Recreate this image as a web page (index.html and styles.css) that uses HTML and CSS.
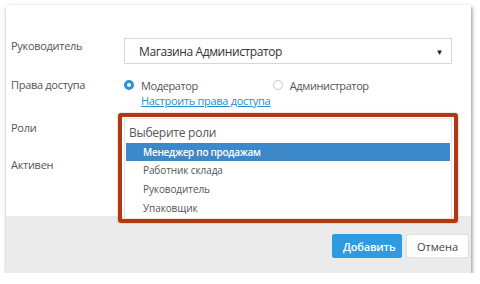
FILE: index.html
```html
<!DOCTYPE html>
<html lang="ru">
<head>
    <meta charset="UTF-8">
    <meta name="viewport" content="width=device-width, initial-scale=1.0">
    <title>Пользователь</title>
    <link rel="stylesheet" href="styles.css">
</head>
<body>

    <div class="dialog">
        <div class="dialog-body">
            <div class="form-row">
                <label class="field-label">Руководитель</label>
                <div class="select">
                    <span>Магазина Администратор</span>
                    <span class="select-arrow">&#9660;</span>
                </div>
            </div>

            <div class="form-row row-access">
                <label class="field-label">Права доступа</label>
                <div>
                    <div class="radios">
                        <span class="radio checked"></span><span class="radio-text">Модератор</span>
                        <span class="radio"></span><span class="radio-text">Администратор</span>
                    </div>
                    <a class="link" href="#">Настроить права доступа</a>
                </div>
            </div>

            <div class="form-row row-roles">
                <label class="field-label">Роли</label>
                <div class="roles">
                    <div class="roles-input">Выберите роли</div>
                    <ul class="roles-list">
                        <li class="active">Менеджер по продажам</li>
                        <li>Работник склада</li>
                        <li>Руководитель</li>
                        <li>Упаковщик</li>
                    </ul>
                    <div class="highlight"></div>
                </div>
            </div>

            <div class="form-row row-active">
                <label class="field-label">Активен</label>
                <div></div>
            </div>
        </div>

        <div class="dialog-footer">
            <button class="btn btn-primary">Добавить</button>
            <button class="btn">Отмена</button>
        </div>
    </div>

</body>
</html>
```

FILE: styles.css
```css
body {
    margin: 0;
    background-color: #fff;
    font-family: 'Open Sans', 'Noto Sans', sans-serif;
    color: #333;
}
.dialog {
    width: 465px;
    height: 268px;
    margin: 5px 0 0 6px;
    background-color: #fff;
    box-shadow: 1px 2px 4px rgba(0, 0, 0, 0.45);
    display: flex;
    flex-direction: column;
}
.dialog-body {
    height: 211px;
    padding: 33px 19px 0 5px;
    box-sizing: border-box;
}
.form-row {
    display: grid;
    grid-template-columns: 113px 1fr;
}
.field-label {
    font-size: 11px;
    letter-spacing: -0.3px;
    line-height: 16px;
    color: #555;
}
.select {
    height: 26px;
    border: 1px solid #d6d6d6;
    box-sizing: border-box;
    display: flex;
    align-items: center;
    justify-content: space-between;
    padding: 0 8px 0 14px;
    font-size: 12px;
    letter-spacing: -0.4px;
    color: #333;
}
.select-arrow {
    font-size: 8px;
    color: #222;
}
.row-access {
    margin-top: 13px;
}
.radios {
    display: flex;
    align-items: center;
    height: 16px;
    font-size: 11px;
    letter-spacing: -0.4px;
    color: #555;
}
.radio {
    width: 10px;
    height: 10px;
    border: 1px solid #ccc;
    border-radius: 50%;
    box-sizing: border-box;
    margin-right: 7px;
}
.radio.checked {
    border: 3px solid #2d8fd5;
}
.radio-text {
    margin-right: 75px;
}
.link {
    display: block;
    font-size: 11px;
    letter-spacing: -0.3px;
    line-height: 15px;
    color: #1f8fd3;
    margin-left: 17px;
}
.row-roles {
    margin-top: 10px;
}
.row-roles .field-label {
    padding-top: 2px;
}
.roles {
    position: relative;
}
.roles-input {
    height: 25px;
    border: 1px solid #e2e2e2;
    border-bottom: none;
    box-sizing: border-box;
    padding: 5px 0 0 4px;
    font-size: 12px;
    letter-spacing: -0.25px;
    color: #555;
}
.roles-list {
    position: absolute;
    top: 100%;
    left: 0;
    right: 0;
    margin: 0;
    padding: 0 1px;
    list-style: none;
    background-color: #fff;
    border: 1px solid #e2e2e2;
    border-top: none;
}
.roles-list li {
    height: 19px;
    line-height: 19px;
    padding-left: 17px;
    font-size: 10px;
    letter-spacing: -0.1px;
    color: #555;
}
.roles-list li.active {
    height: 18px;
    line-height: 18px;
    background-color: #3c88c8;
    color: #fff;
    font-weight: 600;
    letter-spacing: -0.3px;
}
.highlight {
    position: absolute;
    top: -5px;
    left: -6px;
    right: -6px;
    height: 110px;
    border: 4px solid #b3380f;
    border-radius: 3px;
    box-sizing: border-box;
    box-shadow: 0 0 2px rgba(120, 30, 0, 0.4);
}
.row-active {
    margin-top: 14px;
}
.dialog-footer {
    flex: 1;
    background-color: #ebebeb;
    display: flex;
    justify-content: flex-end;
    align-items: flex-start;
    gap: 4px;
    padding: 18px 2px 0 0;
}
.btn {
    height: 24px;
    padding: 0 10px;
    font-family: 'Open Sans', 'Noto Sans', sans-serif;
    font-size: 11px;
    color: #444;
    background-color: #fff;
    border: 1px solid #e0e0e0;
    border-radius: 2px;
}
.btn-primary {
    width: 70px;
    background-color: #2e9be0;
    border-color: #2e9be0;
    color: #fff;
    font-weight: 600;
    letter-spacing: -0.2px;
}
```
